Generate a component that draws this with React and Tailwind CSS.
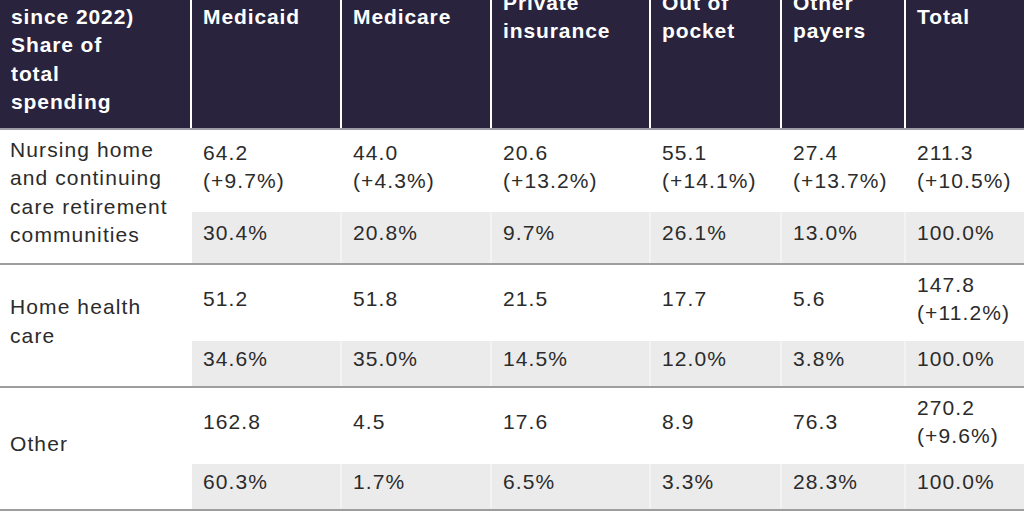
import React from "react";

const W = ["w-[190px]", "w-[150px]", "w-[150px]", "w-[159px]", "w-[131px]", "w-[124px]", "w-[120px]"];

const headers = [
  ["Spending", "($ billions)", "(% change", "since 2022)", "Share of", "total", "spending"],
  ["Medicaid"],
  ["Medicare"],
  ["Private", "insurance"],
  ["Out of", "pocket"],
  ["Other", "payers"],
  ["Total"],
];

const groups = [
  {
    label: ["Nursing home", "and continuing", "care retirement", "communities"],
    values: [
      ["64.2", "(+9.7%)"],
      ["44.0", "(+4.3%)"],
      ["20.6", "(+13.2%)"],
      ["55.1", "(+14.1%)"],
      ["27.4", "(+13.7%)"],
      ["211.3", "(+10.5%)"],
    ],
    shares: ["30.4%", "20.8%", "9.7%", "26.1%", "13.0%", "100.0%"],
  },
  {
    label: ["Home health", "care"],
    values: [["51.2"], ["51.8"], ["21.5"], ["17.7"], ["5.6"], ["147.8", "(+11.2%)"]],
    shares: ["34.6%", "35.0%", "14.5%", "12.0%", "3.8%", "100.0%"],
  },
  {
    label: ["Other"],
    values: [["162.8"], ["4.5"], ["17.6"], ["8.9"], ["76.3"], ["270.2", "(+9.6%)"]],
    shares: ["60.3%", "1.7%", "6.5%", "3.3%", "28.3%", "100.0%"],
  },
];

function Lines({ lines }) {
  return (
    <div>
      {lines.map((l, i) => (
        <div key={i} className="whitespace-nowrap">{l}</div>
      ))}
    </div>
  );
}

export default function App() {
  return (
    <div className="w-[1024px] h-[512px] overflow-hidden bg-white font-['Liberation_Sans',Arial,sans-serif]">
      <div className="-mt-[94px]">
        <div className="flex h-[224px] bg-[#29233d] border-b-2 border-[#9d9ba6] text-white font-bold text-[21px] leading-[28.5px] tracking-[0.9px]">
          {headers.map((h, i) => (
            <div
              key={i}
              className={`${W[i]} shrink-0 flex items-center pl-[11px] ${i > 0 ? "border-l-2 border-white" : ""}`}
            >
              <Lines lines={h} />
            </div>
          ))}
        </div>
        {groups.map((g, gi) => (
          <div key={gi} className="flex border-b-2 border-[#9e9e9e] text-[#2b2b2b] text-[21px] leading-[28.5px] tracking-[1.1px]">
            <div className={`${W[0]} shrink-0 flex items-center pl-[10px] pt-[5.5px] pb-[13.5px]`}>
              <Lines lines={g.label} />
            </div>
            <div className="flex-1 flex flex-col">
              <div className="grow flex">
                {g.values.map((v, i) => (
                  <div
                    key={i}
                    className={`${W[i + 1]} shrink-0 flex items-center pl-[11px] pt-[5.5px] pb-[13.5px] border-l-2 border-white`}
                  >
                    <Lines lines={v} />
                  </div>
                ))}
              </div>
              <div className="grow flex bg-[#ebebeb]">
                {g.shares.map((s, i) => (
                  <div
                    key={i}
                    className={`${W[i + 1]} shrink-0 flex items-center pl-[11px] pt-[4.25px] pb-[12.25px] border-l-2 ${i === 0 ? "border-white" : "border-[#f3f3f3]"}`}
                  >
                    <Lines lines={[s]} />
                  </div>
                ))}
              </div>
            </div>
          </div>
        ))}
      </div>
    </div>
  );
}
